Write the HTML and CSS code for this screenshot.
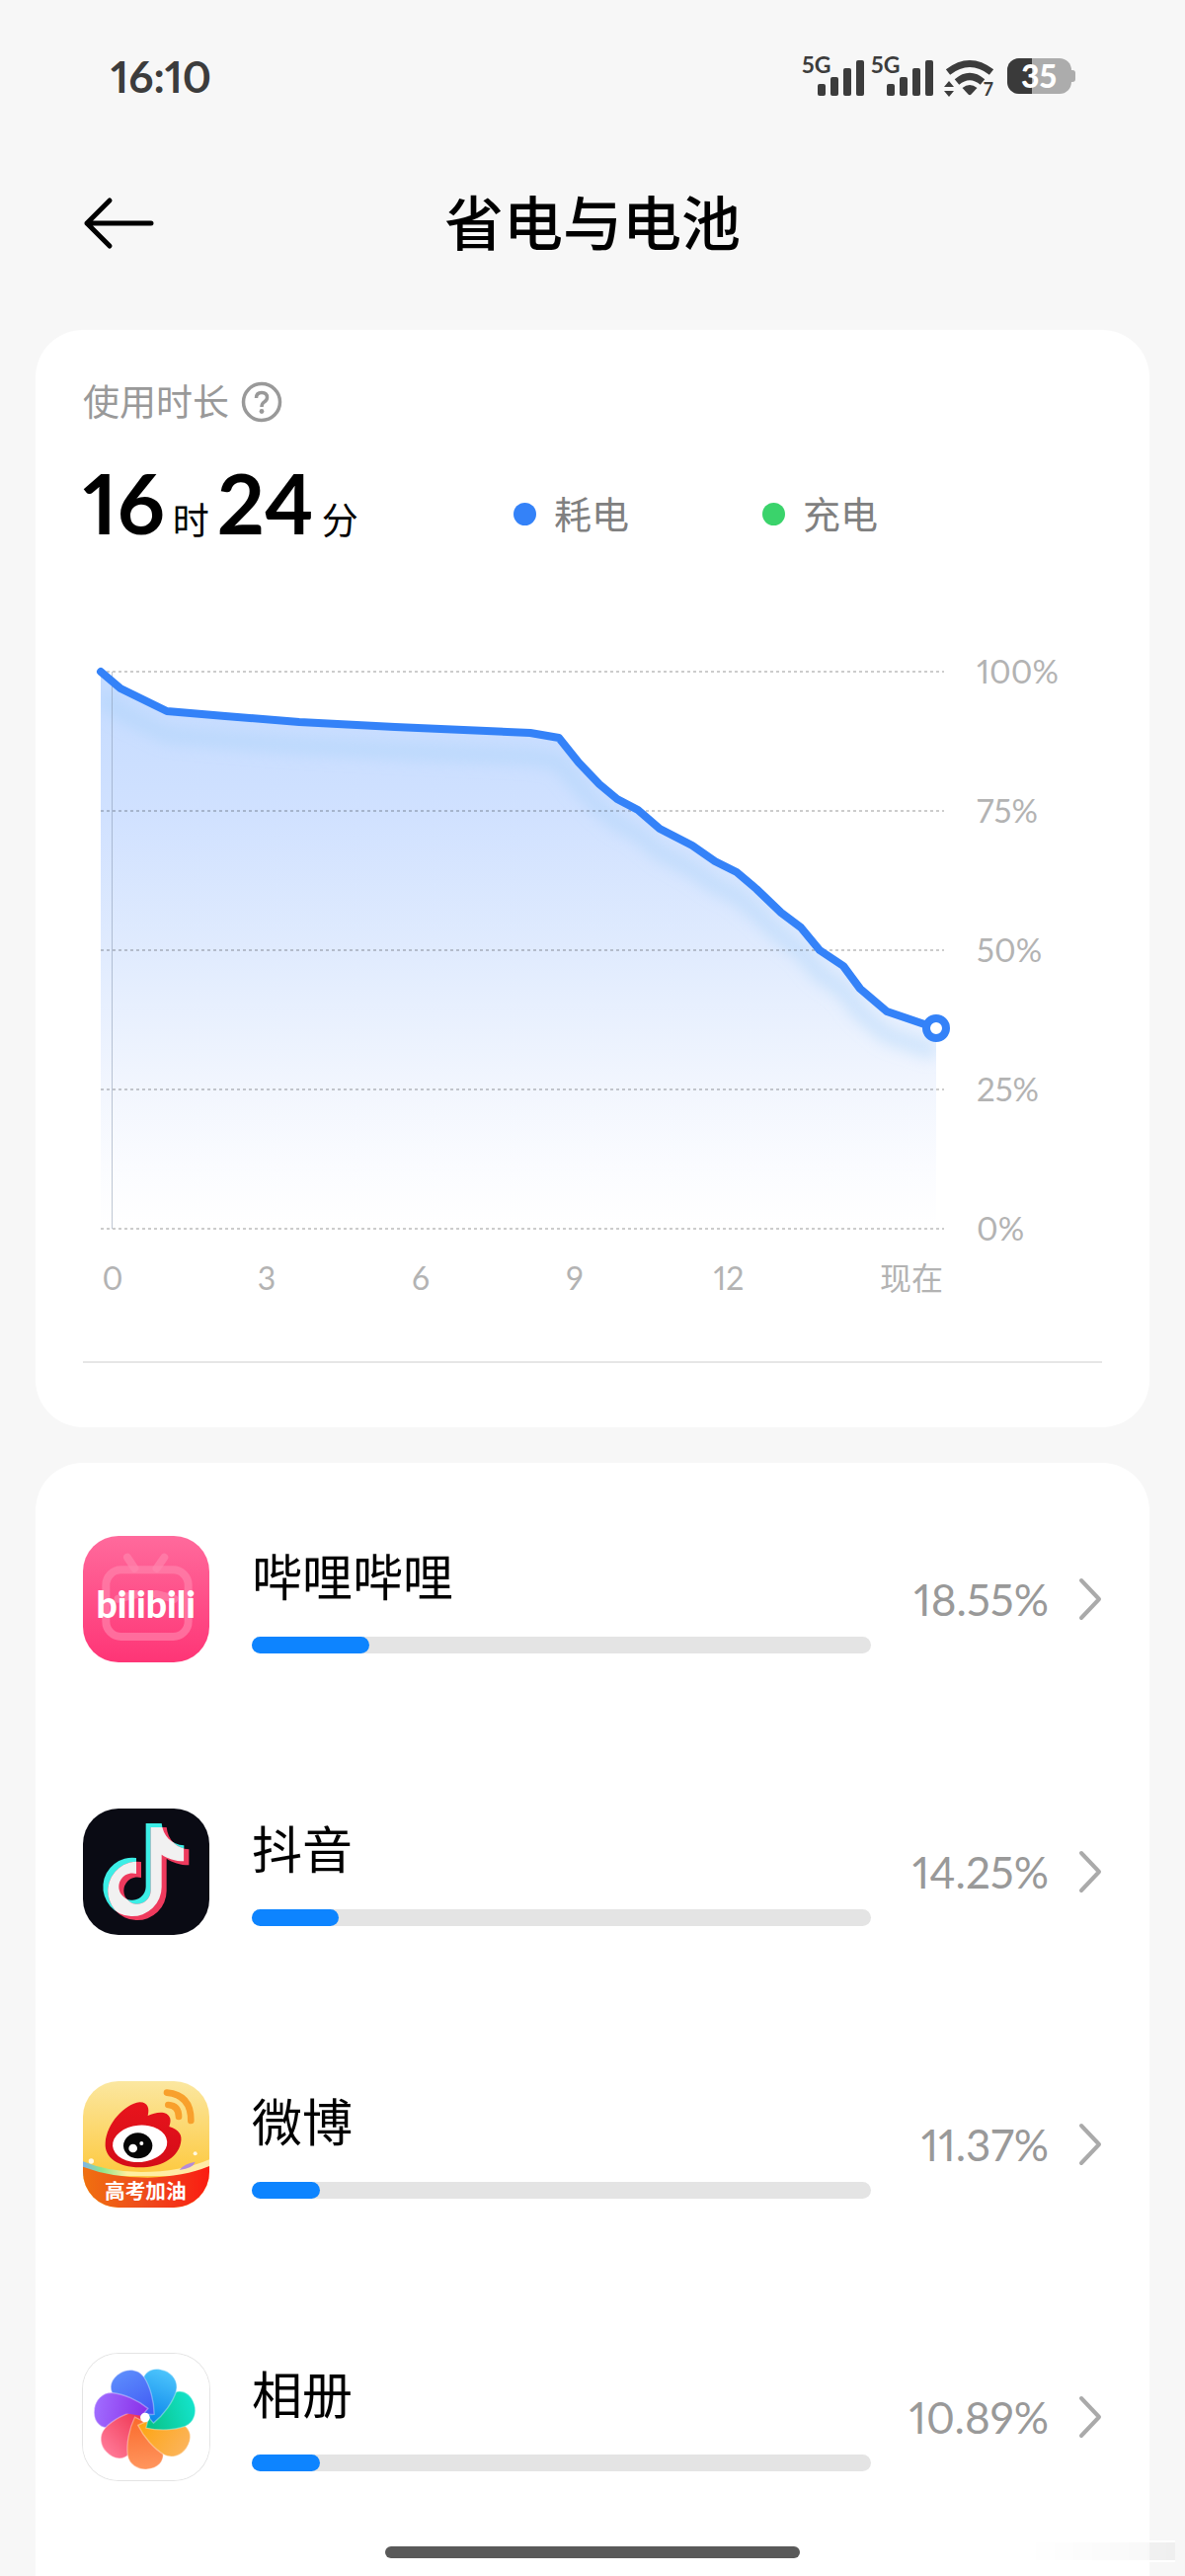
FILE: index.html
```html
<!DOCTYPE html>
<html lang="zh-CN">
<head>
  <meta charset="UTF-8">
  <meta name="viewport" content="width=device-width, initial-scale=1">
  <title>省电与电池</title>
  <link rel="stylesheet" href="styles.css">
</head>
<body>
  <div class="status-bar">
    <span class="status-time">16:10</span>
    <div class="status-icons">
      <svg class="signal" width="62" height="42" viewBox="0 0 62 42">
        <text x="0" y="18">5G</text>
        <rect x="16" y="29" width="8" height="12" rx="2"/>
        <rect x="29" y="22" width="8" height="19" rx="2"/>
        <rect x="42" y="13" width="8" height="28" rx="2"/>
        <rect x="55" y="5" width="8" height="36" rx="2"/>
      </svg>
      <svg class="signal" width="62" height="42" viewBox="0 0 62 42">
        <text x="0" y="18">5G</text>
        <rect x="16" y="29" width="8" height="12" rx="2"/>
        <rect x="29" y="22" width="8" height="19" rx="2"/>
        <rect x="42" y="13" width="8" height="28" rx="2"/>
        <rect x="55" y="5" width="8" height="36" rx="2"/>
      </svg>
      <svg class="wifi" width="52" height="42" viewBox="0 0 52 42">
        <path d="M4 17 Q26 0 48 17" fill="none" stroke="currentColor" stroke-width="7"/>
        <path d="M13 27 Q26 16 39 27" fill="none" stroke="currentColor" stroke-width="7"/>
        <path d="M18.500 33 Q26 27 33.500 33 L27.500 39.500 Q26 41 24.500 39.500Z"/>
        <path d="M0 32 L5 26 L10 32Z M0 36 H10 L5 42Z"/>
        <text x="40" y="41">7</text>
      </svg>
      <svg class="battery" width="70" height="38" viewBox="0 0 70 38">
        <defs>
          <clipPath id="level"><rect width="25" height="38"/></clipPath>
        </defs>
        <rect x="60" y="13" width="9" height="12" rx="3" fill="#acacac"/>
        <rect x="0" y="1" width="65" height="36" rx="12" fill="#acacac"/>
        <rect x="0" y="1" width="65" height="36" rx="12" fill="#3a3a3a" clip-path="url(#level)"/>
        <text x="32" y="31" text-anchor="middle">35</text>
      </svg>
    </div>
  </div>

  <header class="header">
    <button class="back-button" aria-label="返回">
      <svg width="72" height="54" viewBox="0 0 72 54" fill="none" stroke="currentColor" stroke-width="5" stroke-linecap="round" stroke-linejoin="round">
        <path d="M27 4 L4 27 L27 50 M4 27 H69"/>
      </svg>
    </button>
    <h1>省电与电池</h1>
  </header>

  <main class="content">
    <section class="card usage-card">
      <div class="usage-title">
        <span>使用时长</span>
        <button class="help-button" aria-label="帮助">
          <svg width="42" height="42" viewBox="0 0 42 42" fill="none" stroke="currentColor">
            <circle cx="21" cy="21" r="18.500" stroke-width="3.500"/>
            <path d="M15.500 17 Q15.500 11.500 21 11.500 Q26.500 11.500 26.500 16.500 Q26.500 19 23.500 21 Q21 22.500 21 26" stroke-width="3.500"/>
            <circle cx="21" cy="30.500" r="2.400" fill="currentColor" stroke="none"/>
          </svg>
        </button>
      </div>

      <div class="usage-summary">
        <div class="duration">
          <strong>16</strong><span>时</span><strong>24</strong><span>分</span>
        </div>
        <div class="legend"><i class="dot drain"></i>耗电</div>
        <div class="legend"><i class="dot charge"></i>充电</div>
      </div>

      <svg class="chart" viewBox="0 0 1032 680">
        <defs>
          <linearGradient id="fade" x1="0" y1="40" x2="0" y2="604" gradientUnits="userSpaceOnUse">
            <stop offset="0" stop-color="#c4dbff"/>
            <stop offset="0.250" stop-color="#d0e1ff"/>
            <stop offset="0.500" stop-color="#e0ebfe"/>
            <stop offset="0.750" stop-color="#f2f6fe"/>
            <stop offset="0.900" stop-color="#fbfcff"/>
            <stop offset="1" stop-color="#ffffff"/>
          </linearGradient>
          <filter id="soft" x="-10%" y="-10%" width="120%" height="120%">
            <feGaussianBlur stdDeviation="8"/>
          </filter>
          <clipPath id="area">
            <path d="M18 40 L38 57 L85 80 L144 85 L219 91 L316 96 L453 102 L482 107 L502 132 L523 154 L541 169 L562 180 L584 199 L617 216 L640 232 L662 243 L682 260 L707 284 L727 299 L746 322 L770 338 L787 361 L814 384 L864 401 V604 H18 Z"/>
          </clipPath>
        </defs>
        <g clip-path="url(#area)">
          <rect x="18" y="40" width="846" height="564" fill="url(#fade)"/>
          <polyline class="line-shadow" filter="url(#soft)" points="18,64 38,81 85,104 144,109 219,115 316,120 453,126 482,131 502,156 523,178 541,193 562,204 584,223 617,240 640,256 662,267 682,284 707,308 727,323 746,346 770,362 787,385 814,408 864,425"/>
        </g>
        <g class="grid">
          <path d="M18 40 H872"/>
          <path d="M18 181 H872"/>
          <path d="M18 322 H872"/>
          <path d="M18 463 H872"/>
          <path d="M18 604 H872"/>
        </g>
        <path class="axis" d="M29.500 40 V604"/>
        <polyline class="line" points="18,40 38,57 85,80 144,85 219,91 316,96 453,102 482,107 502,132 523,154 541,169 562,180 584,199 617,216 640,232 662,243 682,260 707,284 727,299 746,322 770,338 787,361 814,384 864,401"/>
        <circle class="marker" cx="864" cy="401" r="10"/>
        <g class="labels">
          <text x="905" y="52">100%</text>
          <text x="905" y="193">75%</text>
          <text x="905" y="334">50%</text>
          <text x="905" y="475">25%</text>
          <text x="905" y="616">0%</text>
        </g>
        <g class="labels hours">
          <text x="30" y="666">0</text>
          <text x="186" y="666">3</text>
          <text x="342" y="666">6</text>
          <text x="498" y="666">9</text>
          <text x="654" y="666">12</text>
          <text x="839" y="666">现在</text>
        </g>
      </svg>
      <hr>
    </section>

    <section class="card app-list">
      <a class="app-row" href="#">
        <svg class="app-icon" viewBox="43 45 384 384">
          <defs>
            <linearGradient id="pink" x1="0" y1="0" x2="0" y2="1">
              <stop offset="0" stop-color="#ff6a9c"/>
              <stop offset="1" stop-color="#fe3576"/>
            </linearGradient>
          </defs>
          <rect x="43" y="45" width="384" height="384" fill="url(#pink)"/>
          <g fill="none" stroke="#ff85ad" stroke-opacity="0.650" stroke-width="24" stroke-linecap="round">
            <path d="M178 110 L200 143 M290 110 L267 143"/>
            <rect x="113" y="148" width="250" height="203" rx="46"/>
            <path d="M150 236 L205 222 M265 222 L320 236"/>
          </g>
          <text class="bili-logo" x="234" y="294" text-anchor="middle">bilibili</text>
        </svg>
        <div class="app-info">
          <div class="app-name">哔哩哔哩</div>
          <div class="bar"><div class="bar-fill" style="width: 19%"></div></div>
        </div>
        <span class="percent">18.55%</span>
        <svg class="chevron" width="24" height="44" viewBox="0 0 24 44"><path d="M3 3 L21 22 L3 41"/></svg>
      </a>

      <a class="app-row" href="#">
        <svg class="app-icon" viewBox="43 33 384 384">
          <defs>
            <path id="note" d="M234 78 H282 C286 116 312 143 350 145 V193 C323 193 300 185 282 173 V271 A89 89 0 1 1 205 183 V231 A41 41 0 1 0 234 271 Z"/>
            <clipPath id="note-clip"><use href="#note"/></clipPath>
          </defs>
          <rect x="43" y="33" width="384" height="384" fill="#0a0b14"/>
          <use href="#note" fill="#3ceee6"/>
          <use href="#note" x="15" y="12" fill="#ee3a5d"/>
          <g clip-path="url(#note-clip)"><use href="#note" x="15" y="12" fill="#f1f1f1"/></g>
        </svg>
        <div class="app-info">
          <div class="app-name">抖音</div>
          <div class="bar"><div class="bar-fill" style="width: 14%"></div></div>
        </div>
        <span class="percent">14.25%</span>
        <svg class="chevron" width="24" height="44" viewBox="0 0 24 44"><path d="M3 3 L21 22 L3 41"/></svg>
      </a>

      <a class="app-row" href="#">
        <svg class="app-icon" viewBox="43 52 384 384">
          <defs>
            <linearGradient id="gold" x1="0" y1="0" x2="0" y2="1">
              <stop offset="0" stop-color="#fbe7a0"/>
              <stop offset="0.700" stop-color="#fdcb45"/>
            </linearGradient>
            <linearGradient id="ribbon" x1="0" y1="0" x2="1" y2="0">
              <stop offset="0" stop-color="#f07010"/>
              <stop offset="0.500" stop-color="#ee4a1c"/>
              <stop offset="1" stop-color="#fb1c12"/>
            </linearGradient>
            <linearGradient id="blob" x1="0" y1="0" x2="0" y2="1">
              <stop offset="0" stop-color="#e8141c"/>
              <stop offset="1" stop-color="#d40c18"/>
            </linearGradient>
            <linearGradient id="rainbow" x1="0" y1="0" x2="1" y2="0">
              <stop offset="0" stop-color="#7fb4e8"/>
              <stop offset="0.150" stop-color="#8ce68c"/>
              <stop offset="0.350" stop-color="#fff0a0"/>
              <stop offset="1" stop-color="#ffe9a8"/>
            </linearGradient>
          </defs>
          <rect x="43" y="52" width="384" height="384" fill="url(#gold)"/>
          <path d="M43 296 Q120 328 220 328 Q340 328 427 290 V340 H43Z" fill="url(#rainbow)"/>
          <path d="M43 312 Q130 345 240 345 Q350 342 427 310 V436 H43Z" fill="url(#ribbon)"/>
          <path d="M336 322 Q350 302 384 297 Q378 316 336 322Z" fill="#b48ad8"/>
          <circle cx="68" cy="295" r="8" fill="#fff8e0"/>
          <circle cx="384" cy="272" r="6" fill="#fff8e0"/>
          <g fill="none" stroke="#f8a02c" stroke-width="20" stroke-linecap="round">
            <path d="M298 87 Q372 94 371 172"/>
            <path d="M302 124 Q334 126 334 160"/>
          </g>
          <path d="M111 240 C115 180 170 122 215 116 C240 115 246 135 240 157 C265 145 300 140 308 165 C310 175 307 182 305 190 C335 200 346 215 340 240 C330 290 270 315 215 314 C150 312 108 285 111 240Z" fill="url(#blob)"/>
          <ellipse cx="216" cy="242" rx="83" ry="56" fill="#fff" transform="rotate(-5 216 242)"/>
          <ellipse cx="210" cy="248" rx="44" ry="39" fill="#060606"/>
          <circle cx="195" cy="256" r="13" fill="#fff"/>
          <circle cx="221" cy="241" r="6" fill="#fff"/>
          <text class="weibo-text" x="233" y="409" text-anchor="middle">高考加油</text>
        </svg>
        <div class="app-info">
          <div class="app-name">微博</div>
          <div class="bar"><div class="bar-fill" style="width: 11%"></div></div>
        </div>
        <span class="percent">11.37%</span>
        <svg class="chevron" width="24" height="44" viewBox="0 0 24 44"><path d="M3 3 L21 22 L3 41"/></svg>
      </a>

      <a class="app-row" href="#">
        <svg class="app-icon outlined" viewBox="43 69 384 384">
          <defs>
            <path id="petal" d="M30 5 C50 -30 62 -75 60 -110 C57 -140 30 -156 5 -156 C-30 -156 -50 -135 -48 -108 C-46 -70 -20 -20 30 5Z"/>
            <clipPath id="petal-half"><rect x="5" y="-170" width="80" height="190"/></clipPath>
            <linearGradient id="c1" x1="0" y1="0" x2="0" y2="1"><stop offset="0" stop-color="#a06cff"/><stop offset="1" stop-color="#8a2fe8"/></linearGradient>
            <linearGradient id="c2" x1="0" y1="0" x2="0" y2="1"><stop offset="0" stop-color="#ff7896"/><stop offset="1" stop-color="#ee3450"/></linearGradient>
            <linearGradient id="c3" x1="0" y1="0" x2="0" y2="1"><stop offset="0" stop-color="#ff965e"/><stop offset="1" stop-color="#fa6a2c"/></linearGradient>
            <linearGradient id="c4" x1="0" y1="0" x2="0" y2="1"><stop offset="0" stop-color="#fcb45a"/><stop offset="1" stop-color="#fda410"/></linearGradient>
            <linearGradient id="c5" x1="0" y1="0" x2="0" y2="1"><stop offset="0" stop-color="#14e4cc"/><stop offset="1" stop-color="#08c084"/></linearGradient>
            <linearGradient id="c6" x1="0" y1="0" x2="0" y2="1"><stop offset="0" stop-color="#4cc4fc"/><stop offset="1" stop-color="#0a84ea"/></linearGradient>
            <linearGradient id="c7" x1="0" y1="0" x2="0" y2="1"><stop offset="0" stop-color="#5c8cfc"/><stop offset="1" stop-color="#4058f4"/></linearGradient>
          </defs>
          <rect x="43" y="69" width="384" height="384" fill="#fff"/>
          <g class="petals" transform="translate(231 264)">
            <use href="#petal" fill="url(#c1)" transform="rotate(279)"/>
            <use href="#petal" fill="url(#c2)" transform="rotate(227)"/>
            <use href="#petal" fill="url(#c3)" transform="rotate(176)"/>
            <use href="#petal" fill="url(#c4)" transform="rotate(124)"/>
            <use href="#petal" fill="url(#c5)" transform="rotate(73)"/>
            <use href="#petal" fill="url(#c6)" transform="rotate(21)"/>
            <use href="#petal" fill="url(#c7)" transform="rotate(330)"/>
            <!-- first petal again, so that it also lies over the last one -->
            <g transform="rotate(279)"><use href="#petal" fill="url(#c1)" clip-path="url(#petal-half)"/></g>
          </g>
          <circle cx="232" cy="262" r="14" fill="#fff"/>
        </svg>
        <div class="app-info">
          <div class="app-name">相册</div>
          <div class="bar"><div class="bar-fill" style="width: 11%"></div></div>
        </div>
        <span class="percent">10.89%</span>
        <svg class="chevron" width="24" height="44" viewBox="0 0 24 44"><path d="M3 3 L21 22 L3 41"/></svg>
      </a>
    </section>
  </main>

  <div class="edge-glint"></div>
  <div class="home-indicator"></div>
</body>
</html>
```

FILE: styles.css
```css
:root {
  --page: #f7f7f7;
  --card: #ffffff;
  --text: #000000;
  --text-light: #999999;
  --text-faint: #b3b3b3;
  --status: #3c3c3c;
  --blue: #3482f8;
  --bar: #0d84ff;
  --green: #3ad36b;
  --track: #e4e4e4;
  --radius: 48px;
  --font: Lato, 'Noto Sans CJK SC', sans-serif;
  --font-cjk: 'Noto Sans CJK SC', sans-serif;
}

* {
  box-sizing: border-box;
  margin: 0;
  padding: 0;
}

body {
  min-height: 100vh;
  display: flex;
  flex-direction: column;
  font-family: var(--font);
  font-variant-numeric: proportional-nums;
  background: var(--page);
  color: var(--text);
}

button {
  border: none;
  background: none;
  cursor: pointer;
}

svg {
  display: block;
  flex-shrink: 0;
}

/* Status bar */
.status-bar {
  height: 154px;
  padding: 0 110px 0 112px;
  display: flex;
  align-items: center;
  justify-content: space-between;
  color: var(--status);
}

.status-time {
  font-size: 44px;
  font-weight: 700;
  line-height: 60px;
}

.status-icons {
  display: flex;
  align-items: center;
  gap: 8px;
  fill: currentColor;
}

.status-icons svg {
  overflow: visible;
}

.signal text {
  font-size: 23px;
  font-weight: 700;
}

.wifi {
  margin-left: 4px;
}

.wifi text {
  font-size: 18px;
  font-weight: 700;
}

.battery {
  margin-left: 4px;
}

.battery text {
  font-size: 32px;
  font-weight: 900;
  fill: #ffffff;
}

/* Header */
.header {
  height: 144px;
  padding: 0 84px;
  display: grid;
  grid-template-columns: 72px 1fr 72px;
  align-items: center;
}

.header h1 {
  font-size: 60px;
  font-weight: 500;
  line-height: 80px;
  text-align: center;
}

/* Cards */
.content {
  flex: 1;
  display: flex;
  flex-direction: column;
  gap: 36px;
  padding: 36px 36px 0;
}

.card {
  background: var(--card);
  border-radius: var(--radius);
  padding: 0 48px;
}

.usage-card {
  padding: 48px 48px 65px;
}

.usage-title {
  display: flex;
  align-items: center;
  gap: 12px;
  height: 50px;
  font-size: 37px;
  line-height: 50px;
  color: var(--text-light);
}

.help-button {
  color: var(--text-light);
}

.usage-summary {
  display: grid;
  grid-template-columns: 436fr 252fr 344fr;
  align-items: end;
  margin-top: 25px;
}

.duration {
  display: flex;
  align-items: baseline;
  gap: 8px;
  height: 104px;
}

.duration strong {
  font-size: 84px;
  font-weight: 700;
  line-height: 104px;
}

.duration span {
  font-size: 37px;
  line-height: 40px;
}

.legend {
  display: flex;
  align-items: center;
  gap: 18px;
  font-size: 38px;
  line-height: 82px;
  color: #808080;
}

.dot {
  width: 23px;
  height: 23px;
  border-radius: 50%;
}

.dot.drain {
  background: var(--blue);
}

.dot.charge {
  background: var(--green);
}

/* Chart */
.chart {
  width: 100%;
  margin-top: 79px;
}

.grid path {
  stroke: #000000;
  stroke-opacity: 0.2;
  stroke-width: 2;
  stroke-dasharray: 3 3;
}

.axis {
  stroke: #8090a8;
  stroke-opacity: 0.5;
}

.line {
  fill: none;
  stroke: var(--blue);
  stroke-width: 8;
  stroke-linecap: round;
  stroke-linejoin: round;
}

.line-shadow {
  fill: none;
  stroke: #a8d2fa;
  stroke-opacity: 0.5;
  stroke-width: 14;
}

.marker {
  fill: #ffffff;
  stroke: var(--blue);
  stroke-width: 8;
}

.labels {
  font-size: 33px;
  fill: var(--text-faint);
}

.labels.hours {
  font-size: 32px;
  text-anchor: middle;
}

hr {
  height: 2px;
  margin-top: 58px;
  border: none;
  background: #e6e6e6;
}

/* App list */
.app-list {
  flex: 1;
  border-radius: var(--radius) var(--radius) 0 0;
}

.app-row {
  display: flex;
  align-items: center;
  padding: 74px 0;
  color: inherit;
  text-decoration: none;
}

.app-icon {
  width: 128px;
  height: 128px;
  border-radius: 36px;
}

.app-icon.outlined {
  box-shadow: 0 0 0 1px #e4e4e4;
}

.bili-logo {
  font-size: 112px;
  font-weight: 900;
  fill: #ffffff;
}

.weibo-text {
  font-family: var(--font-cjk);
  font-size: 62px;
  font-weight: 700;
  fill: #ffffff;
}

.petals {
  stroke: #ffffff;
  stroke-opacity: 0.35;
  stroke-width: 4;
}

.app-info {
  flex: 1;
  margin-left: 43px;
}

.app-name {
  font-size: 51px;
  line-height: 64px;
}

.bar {
  height: 17px;
  margin-top: 28px;
  border-radius: 9px;
  background: var(--track);
}

.bar-fill {
  height: 100%;
  border-radius: 9px;
  background: var(--bar);
}

.percent {
  width: 180px;
  font-size: 44px;
  text-align: right;
  color: var(--text-light);
}

.chevron {
  margin-left: 30px;
  fill: none;
  stroke: #aaaaaa;
  stroke-width: 4;
  stroke-linecap: round;
  stroke-linejoin: round;
}

/* Fixed overlays */
.home-indicator {
  position: fixed;
  bottom: 18px;
  left: 50%;
  width: 35%;
  height: 12px;
  margin-left: -17.5%;
  border-radius: 6px;
  background: #595959;
}

.edge-glint {
  position: fixed;
  right: 10px;
  bottom: 14px;
  width: 150px;
  height: 22px;
  border-top: 2px solid rgba(255, 255, 255, 0.9);
  border-bottom: 2px solid rgba(255, 255, 255, 0.9);
  background: linear-gradient(to right, transparent, rgba(0, 0, 0, 0.03));
}
```
